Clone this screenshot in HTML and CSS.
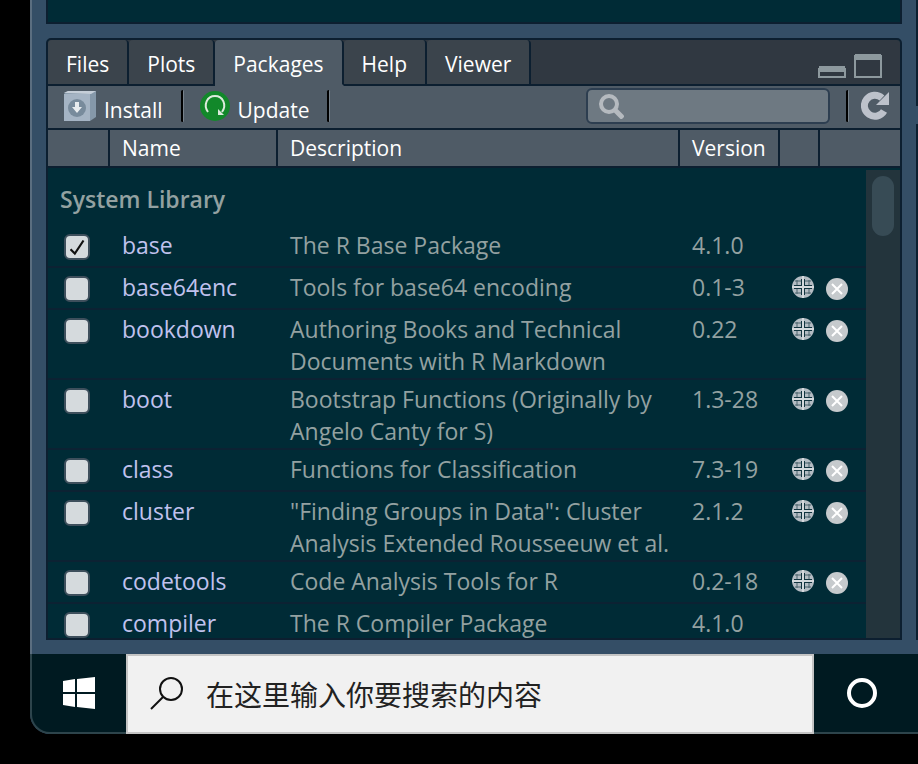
FILE: index.html
```html
<!DOCTYPE html>
<html lang="en">
<head>
<meta charset="utf-8">
<title>Packages</title>
<link rel="stylesheet" href="styles.css">
</head>
<body>
<svg class="sprites" aria-hidden="true">
  <symbol id="globe" viewBox="0 0 22 22">
    <circle cx="11" cy="11" r="11" fill="#b4bcc3"/>
    <g fill="none" stroke="#4a626d" stroke-width="1"><path d="M3 5h16M3 17h16M5 4v14M17 4v14"/></g>
    <path d="M11 3v16M2 11h18" stroke="#12343f" stroke-width="4"/>
    <path d="M11 0v22M0 11h22" stroke="#d5d9dd" stroke-width="2"/>
  </symbol>
  <symbol id="remove" viewBox="0 0 22 22">
    <circle cx="11" cy="11" r="11" fill="#c6cacd"/>
    <path d="M6 6l10 10M16 6L6 16" stroke="#fff" stroke-width="2"/>
  </symbol>
</svg>
<div class="window">
  <div class="desktop">
    <main class="column">
      <div class="upper-pane"></div>
      <section class="pane">
        <nav class="tabs">
          <button class="tab">Files</button>
          <button class="tab">Plots</button>
          <button class="tab active">Packages</button>
          <button class="tab">Help</button>
          <button class="tab">Viewer</button>
          <div class="tab-space">
            <button class="icon-button" aria-label="Minimize"><svg width="28" height="24" viewBox="0 0 28 24"><path d="M1 12h26v2h1v10H0V14h1z" fill="#8d999e"/><path d="M2 18h24v4H2z" fill="#303841"/></svg></button>
            <button class="icon-button" aria-label="Maximize"><svg width="28" height="24" viewBox="0 0 28 24"><path d="M1 0h26v1h1v23H0V1h1z" fill="#8d999e"/><path d="M2 6h24v16H2z" fill="#303841"/></svg></button>
          </div>
        </nav>
        <div class="toolbar">
          <button class="tool">
            <svg width="32" height="30" viewBox="0 0 32 30"><path d="M0 2l4-2h28v26l-6 4z" fill="#8598a9"/><path d="M0 2l4-2h28l-5 3z" fill="#c5ced8"/><path d="M0 3h26v27H0z" fill="#a5b4c4"/><circle cx="13" cy="17" r="9" fill="#788b9c"/><path d="M11 11h4v5h3l-5 6-5-6h3z" fill="#e8ecef"/></svg>
            <span>Install</span>
          </button>
          <i class="divider"></i>
          <button class="tool update">
            <svg width="30" height="30" viewBox="0 0 30 30"><circle cx="15" cy="15" r="15" fill="#12882a"/><path d="M8 21c-5-7-1-16 7-16s12 9 7 16" fill="none" stroke="#dcebdc" stroke-width="2"/><path d="M18 18v6h6z" fill="#dcebdc"/></svg>
            <span>Update</span>
          </button>
          <i class="divider"></i>
          <label class="search">
            <svg width="26" height="26" viewBox="0 0 26 26" fill="none" stroke="#b5babf"><circle cx="11" cy="11" r="8" stroke-width="4"/><path d="M17 17l8 8" stroke-width="5"/></svg>
            <input type="search" aria-label="Search packages">
          </label>
          <i class="divider"></i>
          <button class="icon-button" aria-label="Refresh"><svg width="28" height="30" viewBox="0 0 28 30"><path d="M21 7a10.500 10.500 0 1 0 2 13" fill="none" stroke="#bdc2cb" stroke-width="7"/><path d="M28 1v13H15z" fill="#bdc2cb"/></svg></button>
        </div>
        <div class="list">
          <table>
            <colgroup><col class="c-check"><col class="c-name"><col><col class="c-version"><col class="c-web"><col class="c-remove"></colgroup>
            <thead><tr><th></th><th>Name</th><th>Description</th><th>Version</th><th></th><th></th></tr></thead>
            <tbody>
              <tr class="group"><th colspan="6">System Library</th></tr>
              <tr><td><label class="check"><input type="checkbox" aria-label="base" checked><svg viewBox="0 0 24 24"><path d="M6 14l4 4 8-12" fill="none" stroke="#111" stroke-width="2"/></svg></label></td><td><a href="#">base</a></td><td>The R Base Package</td><td>4.1.0</td><td></td><td></td></tr>
              <tr><td><label class="check"><input type="checkbox" aria-label="base64enc"></label></td><td><a href="#">base64enc</a></td><td>Tools for base64 encoding</td><td>0.1-3</td><td><button class="action" aria-label="Browse base64enc"><svg><use href="#globe"/></svg></button></td><td><button class="action" aria-label="Remove base64enc"><svg><use href="#remove"/></svg></button></td></tr>
              <tr><td><label class="check"><input type="checkbox" aria-label="bookdown"></label></td><td><a href="#">bookdown</a></td><td>Authoring Books and Technical Documents with R Markdown</td><td>0.22</td><td><button class="action" aria-label="Browse bookdown"><svg><use href="#globe"/></svg></button></td><td><button class="action" aria-label="Remove bookdown"><svg><use href="#remove"/></svg></button></td></tr>
              <tr><td><label class="check"><input type="checkbox" aria-label="boot"></label></td><td><a href="#">boot</a></td><td>Bootstrap Functions (Originally by Angelo Canty for S)</td><td>1.3-28</td><td><button class="action" aria-label="Browse boot"><svg><use href="#globe"/></svg></button></td><td><button class="action" aria-label="Remove boot"><svg><use href="#remove"/></svg></button></td></tr>
              <tr><td><label class="check"><input type="checkbox" aria-label="class"></label></td><td><a href="#">class</a></td><td>Functions for Classification</td><td>7.3-19</td><td><button class="action" aria-label="Browse class"><svg><use href="#globe"/></svg></button></td><td><button class="action" aria-label="Remove class"><svg><use href="#remove"/></svg></button></td></tr>
              <tr><td><label class="check"><input type="checkbox" aria-label="cluster"></label></td><td><a href="#">cluster</a></td><td>"Finding Groups in Data": Cluster Analysis Extended Rousseeuw et al.</td><td>2.1.2</td><td><button class="action" aria-label="Browse cluster"><svg><use href="#globe"/></svg></button></td><td><button class="action" aria-label="Remove cluster"><svg><use href="#remove"/></svg></button></td></tr>
              <tr><td><label class="check"><input type="checkbox" aria-label="codetools"></label></td><td><a href="#">codetools</a></td><td>Code Analysis Tools for R</td><td>0.2-18</td><td><button class="action" aria-label="Browse codetools"><svg><use href="#globe"/></svg></button></td><td><button class="action" aria-label="Remove codetools"><svg><use href="#remove"/></svg></button></td></tr>
              <tr><td><label class="check"><input type="checkbox" aria-label="compiler"></label></td><td><a href="#">compiler</a></td><td>The R Compiler Package</td><td>4.1.0</td><td></td><td></td></tr>
            </tbody>
          </table>
          <div class="scrollbar"><div class="thumb"></div></div>
        </div>
      </section>
    </main>
    <aside class="next-pane"></aside>
  </div>
  <footer class="taskbar">
    <button class="start" aria-label="Start"><svg width="32" height="32" viewBox="0 0 32 32" fill="#fff"><path d="M0 4l12-2v13H0zM14 2l18-2v15H14zM0 17h12v13L0 28zM14 17h18v15l-18-2z"/></svg></button>
    <label class="task-search">
      <svg width="34" height="34" viewBox="0 0 34 34" fill="none" stroke="#111" stroke-width="2"><circle cx="21" cy="12" r="11"/><path d="M13 20L1 32"/></svg>
      <input type="text" aria-label="搜索" placeholder="在这里输入你要搜索的内容">
    </label>
    <button class="cortana" aria-label="Cortana"><svg width="32" height="32" viewBox="0 0 32 32"><circle cx="16" cy="16" r="13" fill="none" stroke="#fff" stroke-width="4"/></svg></button>
  </footer>
</div>
</body>
</html>
```
FILE: styles.css
```css
* { box-sizing: border-box; }
body {
  margin: 0;
  height: 100vh;
  padding: 0 0 30px 30px;
  background: #000;
  color: #fff;
  font: 21px/32px "Open Sans", "Noto Sans", sans-serif;
  overflow: hidden;
}
button, input { font: inherit; color: inherit; border: 0; margin: 0; padding: 0; background: none; }
svg { display: block; }
.sprites { position: absolute; width: 0; height: 0; }
.window {
  height: 100%;
  display: flex;
  flex-direction: column;
  background: #344e66;
  border-radius: 0 0 0 20px;
  overflow: hidden;
}
.desktop { flex: 1; min-height: 0; display: flex; gap: 14px; padding: 0 0 14px 14px; border-left: 2px solid #5b6e80; }
.column { flex: 1; min-width: 0; display: flex; flex-direction: column; gap: 14px; }
.upper-pane { height: 24px; background: #002b36; border: 2px solid #0c1f30; border-top: 0; }
.next-pane { width: 2px; background: linear-gradient(#0c1f30 106px, #344e66 106px, #344e66 124px, #0c1f30 124px); }
.pane {
  flex: 1;
  min-height: 0;
  display: flex;
  flex-direction: column;
  border: 2px solid #0c1f30;
  border-radius: 5px 5px 0 0;
  background: #002b36;
  overflow: hidden;
}
.tabs { display: flex; height: 46px; background: #303841; }
.tab {
  padding: 4px 18px 0;
  background: #3b444c;
  border-right: 2px solid #0c1f30;
  border-bottom: 2px solid #0c1f30;
  border-radius: 4px 4px 0 0;
}
.tab.active { background: #4f5b66; border-bottom-color: #4f5b66; }
.tab-space { flex: 1; display: flex; justify-content: flex-end; gap: 8px; padding: 14px 18px 0; border-bottom: 2px solid #0c1f30; }
.icon-button { display: flex; }
.toolbar { display: flex; align-items: center; height: 44px; padding: 0 11px 2px 16px; background: #4f5b66; border-bottom: 2px solid #0c1f30; }
.tool { display: flex; align-items: center; gap: 8px; }
.tool span { padding-top: 8px; }
.divider { width: 3px; height: 32px; margin: 0 16px 0 18px; background: linear-gradient(90deg, #000 2px, #77828b 2px); border-radius: 2px; }
.search {
  display: flex;
  align-items: center;
  width: 244px;
  height: 36px;
  margin-left: auto;
  padding-left: 10px;
  background: #6e7982;
  border: 2px solid #2d3e50;
  border-radius: 6px;
}
.search input { flex: 1; min-width: 0; padding: 0 8px; outline: 0; }
.search + .divider { margin: 0 12px 0 16px; }
.list { flex: 1; min-height: 0; position: relative; overflow: hidden; }
table { width: 100%; table-layout: fixed; border-collapse: separate; border-spacing: 0; }
.c-check { width: 62px; }
.c-name { width: 168px; }
.c-version { width: 100px; }
.c-web { width: 40px; }
.c-remove { width: 80px; }
thead th {
  height: 38px;
  padding: 0 12px;
  background: #4f5b66;
  border-right: 2px solid #0c1f30;
  border-bottom: 2px solid #0c1f30;
  font-weight: 400;
  text-align: left;
}
thead th:last-child { border-right: 0; }
tbody { font-size: 23px; }
.group th { height: 58px; padding: 4px 12px 0; color: #93a1a1; text-align: left; font-weight: 600; }
td { height: 42px; padding: 3px 2px 1px 12px; vertical-align: top; color: #93a1a1; border-bottom: 2px solid #0c2233; }
td:first-child { padding: 8px 16px 0; }
td:nth-child(n+5) { padding: 8px 0 0 12px; }
td:last-child { padding: 10px 0 0 6px; }
td a { color: #c0c2ee; text-decoration: none; }
.check { display: block; position: relative; width: 26px; height: 26px; }
.check input { display: block; appearance: none; width: 26px; height: 26px; background: #d5dadd; border: 2px solid #3e4f5c; border-radius: 6px; }
.check svg { position: absolute; inset: 0; pointer-events: none; }
.action { display: block; }
.action svg { width: 22px; height: 22px; }
.scrollbar { position: absolute; top: 40px; right: 0; bottom: 0; width: 34px; padding: 6px; background: #23343c; }
.thumb { width: 22px; height: 60px; border-radius: 11px; background: #374b55; }
.taskbar { display: flex; height: 80px; background: #001a21; border-bottom: 2px solid #2d444b; border-left: 2px solid #2d444b; border-radius: 0 0 0 20px; }
.start { display: grid; place-items: center; width: 94px; }
.task-search {
  flex: 1;
  display: flex;
  align-items: center;
  gap: 22px;
  height: 80px;
  padding-left: 22px;
  background: #f1f1f1;
  border: 2px solid #c4c4c4;
}
.task-search input { flex: 1; min-width: 0; outline: 0; color: #222; font: 28px/40px "Noto Sans CJK SC", sans-serif; }
.task-search input::placeholder { color: #222; opacity: 1; }
.cortana { display: grid; place-items: center; width: 104px; padding-right: 8px; }
```
